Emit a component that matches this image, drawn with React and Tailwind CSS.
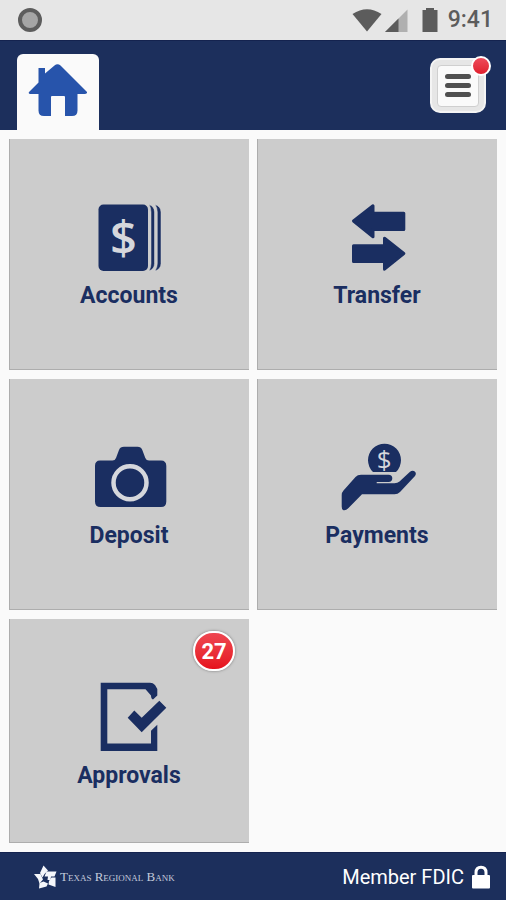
import clsx from 'clsx'

const AccountsIcon = () => (
	<svg viewBox="0 0 80 72" className="w-20 h-[72px]" aria-hidden="true">
		<rect x="9.5" y="3.5" width="49.5" height="66.5" rx="5" fill="#1a2e61" />
		<g fill="#1a2e61" stroke="#dadada" strokeWidth="0.5">
			<path d="M60 3.500Q65.500 5.500 65.500 11V62.500Q65.500 68 60 70Q62 66.500 62 62.500V11Q62 7 60 3.500Z" />
			<path d="M66 3.500Q72 5.500 72 11V62.500Q72 68 66 70Q68.300 66.500 68.300 62.500V11Q68.300 7 66 3.500Z" />
		</g>
		<text x="34.500" y="54" textAnchor="middle" fontSize="47" fontWeight="600" fill="#d5d7dc" fontFamily="'Open Sans', sans-serif">
			$
		</text>
	</svg>
)

const TransferIcon = () => (
	<svg viewBox="0 0 80 72" className="w-20 h-[72px]" aria-hidden="true">
		<g fill="#1a2e61" stroke="#1a2e61" strokeWidth="3" strokeLinejoin="round">
			<path d="M16.500 20L36 4.800V12.200H66.800V28.500H36V35.800Z" />
			<path d="M66.800 52.500L47.500 37.300V44.800H16.500V60.500H47.500V68.200Z" />
		</g>
	</svg>
)

const DepositIcon = () => (
	<svg viewBox="0 0 80 72" className="w-20 h-[72px]" aria-hidden="true">
		<path
			d="M11 19.500H23.500Q26 19.500 27 17L30 9Q31.200 5.700 35 5.700H48.500Q52 5.700 53.300 9L56.300 17Q57.300 19.500 60 19.500H72Q77.300 19.500 77.300 25V60.500Q77.300 66 72 66H11.500Q6 66 6 60.500V25Q6 19.500 11 19.500Z"
			fill="#1a2e61"
		/>
		<circle cx="41" cy="41.700" r="16.500" fill="none" stroke="#d5d7dc" strokeWidth="4.500" />
	</svg>
)

const PaymentsIcon = () => (
	<svg viewBox="0 0 80 72" className="w-20 h-[72px] overflow-visible" aria-hidden="true">
		<path d="M36 31A16.500 16.500 0 1 1 59 31Z" fill="#1a2e61" />
		<text x="47.200" y="28" textAnchor="middle" fontSize="26" fontWeight="500" fill="#d5d7dc" fontFamily="'Open Sans', sans-serif">
			$
		</text>
		<path
			d="M4.700 54Q4.700 51.500 6.500 49.500L18.500 36Q20.500 33.700 24 33.700H51.500Q55.300 33.700 55.300 37.200Q55.300 40.700 51.500 41H39.700V42.300H57.500Q60.500 42.300 62.500 40.500L73 30.800Q75.500 28.800 77.800 30.500Q79.800 32.500 78 35L63 51Q60.800 53.300 57.500 53.300H25L11.500 67Q8.500 70 6 69Q4.700 68 4.700 65.500Z"
			fill="#1a2e61"
		/>
	</svg>
)

const ApprovalsIcon = () => (
	<svg viewBox="0 0 80 72" className="w-20 h-[72px]" aria-hidden="true">
		<g fill="#1a2e61">
			<path d="M11.700 1.700H61Q64 1.700 66 4L68.300 8V14.500L64 18.500Q62 18 62 14.500L56.500 8.200H18.300V62.500H62V49.700L68.300 43.700V70H11.700Z" />
			<path d="M38.700 36.700L45.300 29.500L52.700 36.700L70.300 19.700L77.300 26.700L52.700 51.300Z" />
		</g>
	</svg>
)

const HomeIcon = () => (
	<svg viewBox="0 0 60 54" className="w-[60px] h-[54px]" aria-hidden="true">
		<path
			d="M10.500 4H17V9.500L26.500 1.500Q29.500 -1 32.500 1.500L59 28Q59.500 30 57 30H49.500V46.500Q49.500 52 44 52H37V33Q37 32 36 32H24Q23 32 23 33V52H16Q10.500 52 10.500 46.500V30H2.500Q0 30 1 28L10.500 18.500Z"
			fill="#2754ab"
		/>
	</svg>
)

const StarLogo = () => (
	<svg viewBox="0 0 24 24" className="w-6 h-6" aria-hidden="true">
		<g fill="#f4f6fa">
			<path d="M9.500 0.500L14 5.500L10.500 9L8.500 12.500L6 8Z" />
			<path d="M12.500 6.500H22.500L20.500 11.500H17L16.500 15H13.500L14 11.500H10.500Z" />
			<path d="M17.500 12.500H21.500V22L14.500 19.500L15 16Z" />
			<path d="M9.500 16.500L14 18.500L12.500 21.500L5 23.500L5.500 18Z" />
			<path d="M0 9L6.500 9L9 14.500L5.500 18.500L4 14Z" />
		</g>
	</svg>
)

const LockIcon = () => (
	<svg viewBox="0 0 20 24" className="w-5 h-6" aria-hidden="true">
		<path d="M5 11V7.500Q5 2.200 10 2.200Q15 2.200 15 7.500V11" fill="none" stroke="#fff" strokeWidth="3" />
		<rect x="1" y="10" width="18" height="13.500" rx="1" fill="#fff" />
	</svg>
)

const StatusBar = () => (
	<div className="flex items-center justify-between h-10 pl-[18px] pr-[13px] bg-[#e6e6e6] text-[#5c5c5c]">
		<div className="w-6 h-6 rounded-full border-4 border-[#5d5d5d] bg-[#a5a5a5]" />
		<div className="flex items-center">
			<svg viewBox="0 0 88 26" className="w-[88px] h-[26px] mr-2" aria-hidden="true">
				<path d="M0.500 7Q15 -2.500 29.500 7L15 24.500Z" fill="#5c5c5c" />
				<path d="M55.500 2.500V25H33Z" fill="#b0b0b0" />
				<path d="M46.500 11.500V25H33Z" fill="#5c5c5c" />
				<path d="M74 1H82V3H85.500V25H70.500V3H74Z" fill="#5c5c5c" />
			</svg>
			<span className="text-[23px] leading-7 font-medium">9:41</span>
		</div>
	</div>
)

const items = [
	{ name: 'Accounts', icon: AccountsIcon },
	{ name: 'Transfer', icon: TransferIcon },
	{ name: 'Deposit', icon: DepositIcon },
	{ name: 'Payments', icon: PaymentsIcon },
	{ name: 'Approvals', icon: ApprovalsIcon, count: 27 },
]

const Tile = ({ name, icon: Icon, count }) => (
	<button
		type="button"
		className={clsx(
			'relative flex flex-col items-center pt-[62px] bg-[#cccccc] shadow-[inset_1px_-1px_0_#adadad]',
			count ? 'h-56' : 'h-[231px]'
		)}
	>
		<Icon />
		<span className="mt-[9px] text-[23px] leading-7 font-bold text-[#1a2e61]">{name}</span>
		{count && (
			<span className="absolute top-3 right-3.5 flex items-center justify-center w-[42px] h-10 rounded-full border-2 border-white bg-linear-to-b from-[#ee4550] to-[#e60f1c] text-[22px] font-bold text-white shadow-[0_0_3px_#777]">
				{count}
			</span>
		)}
	</button>
)

const App = () => {
	return (
		<div className="flex flex-col min-h-screen bg-[#fafafa] font-['Roboto',sans-serif]">
			<StatusBar />

			<header className="flex items-end justify-between h-[90px] pl-[17px] pr-5 bg-[#1c2f5c] border-t border-[#14234f]">
				<a href="#home" aria-label="Home" className="flex justify-center w-[82px] h-[76px] pt-2.5 rounded-t-md bg-[#fafafa]">
					<HomeIcon />
				</a>
				<button
					type="button"
					aria-label="Menu"
					className="relative flex items-center justify-center w-14 h-[55px] mb-[17px] rounded-[10px] border-2 border-[#f4f4f4] bg-[#e6e6e6]"
				>
					<span className="flex flex-col items-center justify-center gap-1 w-[42px] h-[42px] rounded-sm border border-[#cfcfcf] bg-[#fafafa]">
						<span className="w-[26px] h-[5px] rounded-sm bg-[#505050]" />
						<span className="w-[26px] h-[5px] rounded-sm bg-[#505050]" />
						<span className="w-[26px] h-[5px] rounded-sm bg-[#505050]" />
					</span>
					<span className="absolute -top-1 -right-[7px] w-5 h-5 rounded-full border-2 border-white bg-linear-to-b from-[#ee4a5a] to-[#e01c2c]" />
				</button>
			</header>

			<main className="grid grid-cols-2 content-start gap-x-2 gap-y-[9px] grow px-[9px] pt-[9px] pb-2">
				{items.map((item) => (
					<Tile key={item.name} {...item} />
				))}
			</main>

			<footer className="flex items-center justify-between h-12 pl-[34px] pr-[15px] bg-[#1c2f5c] border-t border-[#14234f] text-white">
				<div className="flex items-center gap-0.5">
					<StarLogo />
					<span className="font-['Liberation_Serif',serif] text-[13px] [font-variant:small-caps] text-[#c3cadb]">Texas Regional Bank</span>
				</div>
				<div className="flex items-center gap-[7px]">
					<span className="text-xl leading-6">Member FDIC</span>
					<LockIcon />
				</div>
			</footer>
		</div>
	)
}

export default App
